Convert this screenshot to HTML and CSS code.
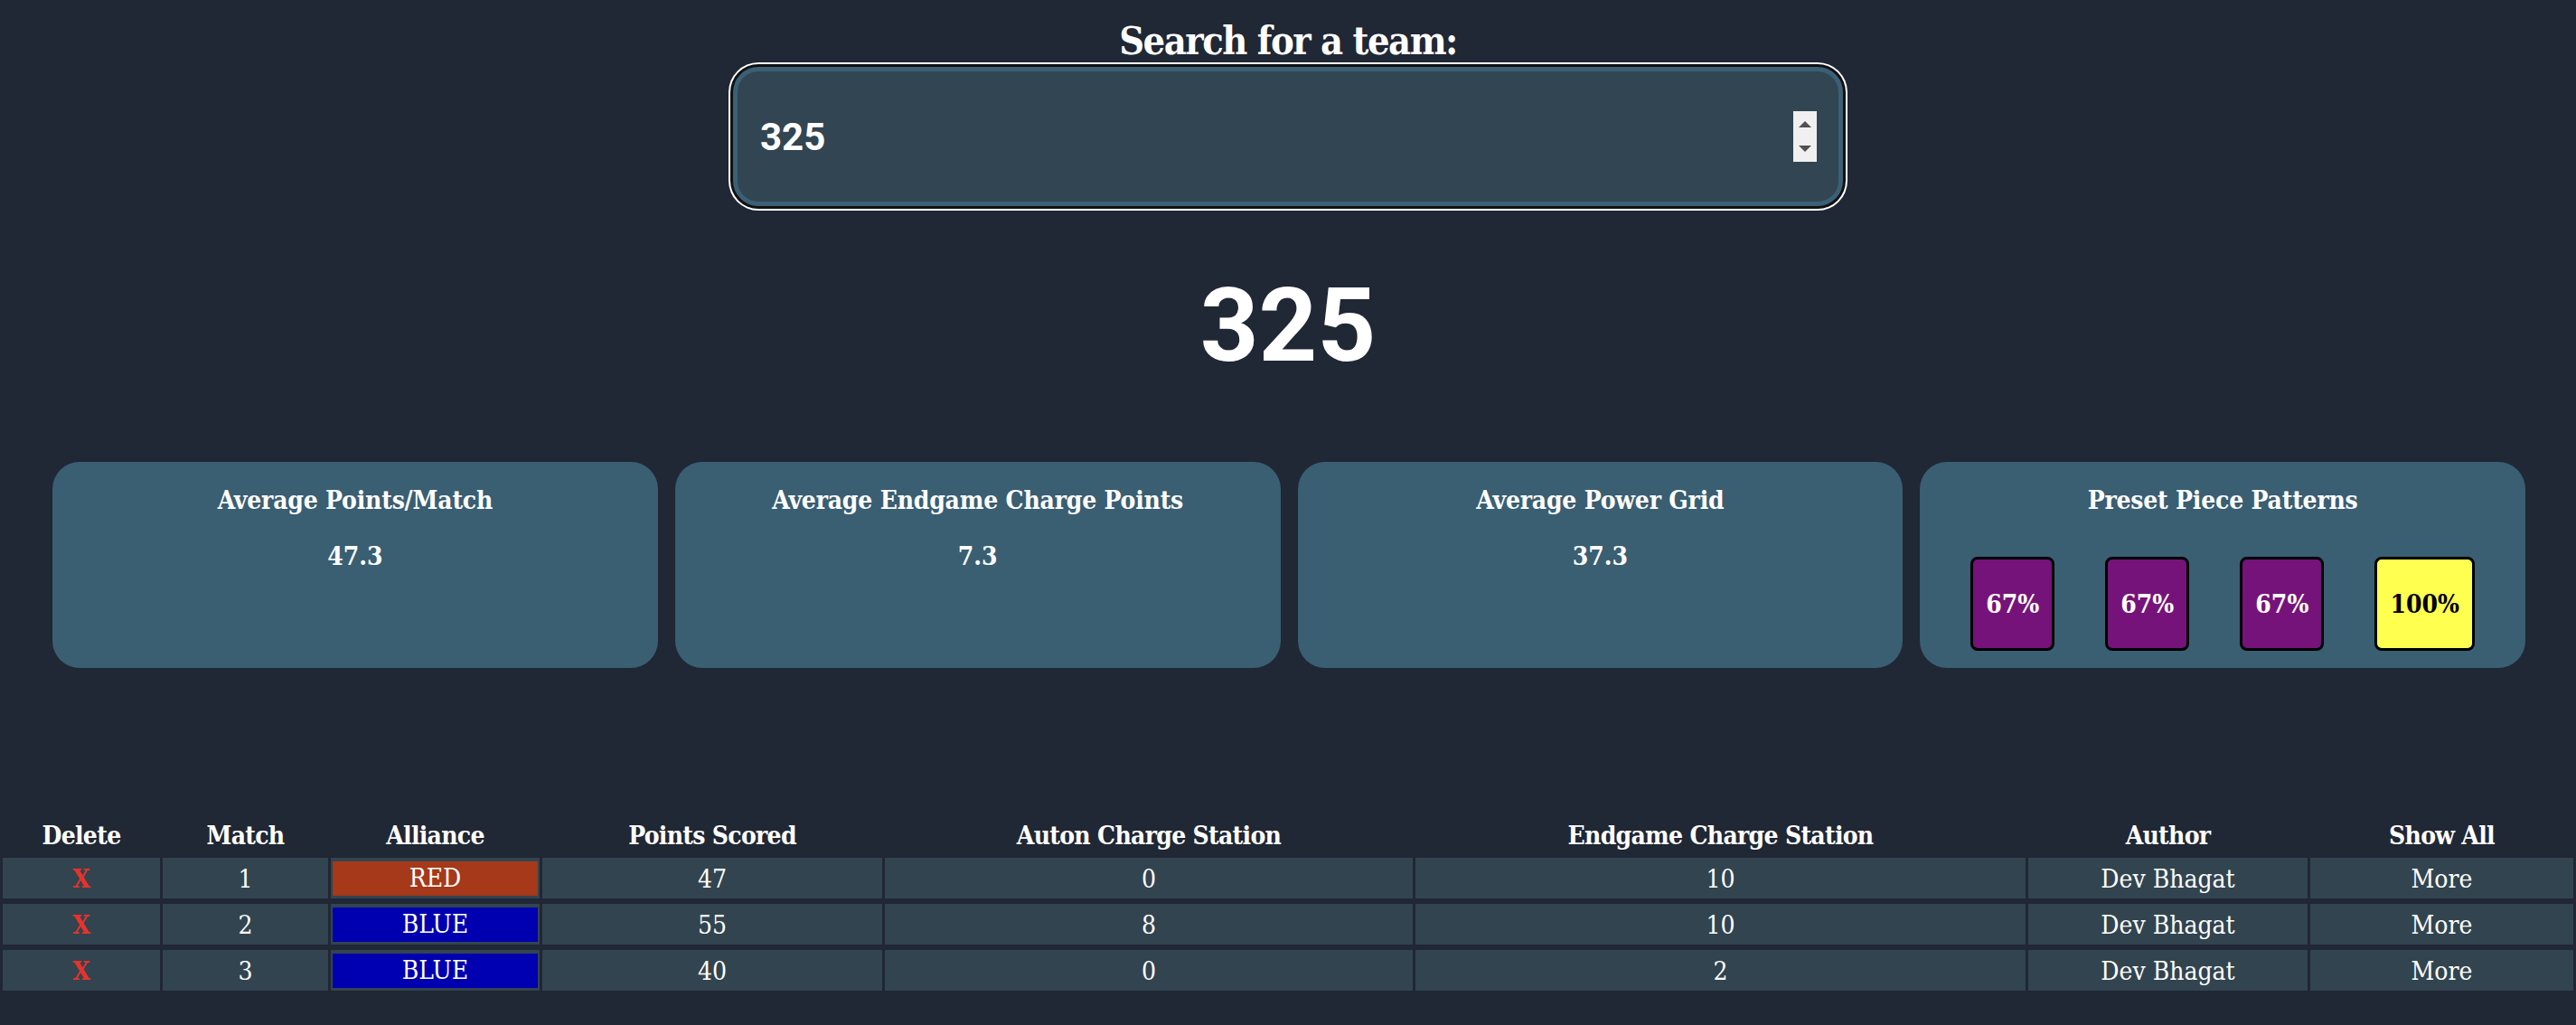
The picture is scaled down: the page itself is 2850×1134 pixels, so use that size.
FILE: index.html
```html
<!DOCTYPE html>
<html lang="en">
<head>
<meta charset="utf-8">
<title>Team Search</title>
<link rel="stylesheet" href="styles.css">
</head>
<body class="page">
<main class="app">
  <section class="search">
    <h2 class="search-label">Search for a team:</h2>
    <div class="search-field">
      <input class="search-input" type="text" value="325" aria-label="Team number">
      <span class="spinner" aria-hidden="true">
        <svg class="spinner-icon" width="26" height="56" viewBox="0 0 26 56">
          <polygon points="6,18 20,18 13,11" fill="#505050"/>
          <polygon points="6,38 20,38 13,45" fill="#505050"/>
        </svg>
      </span>
    </div>
  </section>

  <h1 class="team-number">325</h1>

  <section class="stats">
    <div class="card">
      <h3 class="card-title">Average Points/Match</h3>
      <p class="card-value">47.3</p>
    </div>
    <div class="card">
      <h3 class="card-title">Average Endgame Charge Points</h3>
      <p class="card-value">7.3</p>
    </div>
    <div class="card">
      <h3 class="card-title">Average Power Grid</h3>
      <p class="card-value">37.3</p>
    </div>
    <div class="card">
      <h3 class="card-title">Preset Piece Patterns</h3>
      <div class="patterns">
        <span class="piece piece-cube">67%</span>
        <span class="piece piece-cube">67%</span>
        <span class="piece piece-cube">67%</span>
        <span class="piece piece-cone">100%</span>
      </div>
    </div>
  </section>

  <table class="matches">
    <colgroup>
      <col class="col-delete">
      <col class="col-match">
      <col class="col-alliance">
      <col class="col-points">
      <col class="col-auton">
      <col class="col-endgame">
      <col class="col-author">
      <col class="col-more">
    </colgroup>
    <thead>
      <tr>
        <th>Delete</th>
        <th>Match</th>
        <th>Alliance</th>
        <th>Points Scored</th>
        <th>Auton Charge Station</th>
        <th>Endgame Charge Station</th>
        <th>Author</th>
        <th>Show All</th>
      </tr>
    </thead>
    <tbody>
      <tr>
        <td class="delete">X</td>
        <td>1</td>
        <td class="alliance"><span class="tag tag-red">RED</span></td>
        <td>47</td>
        <td>0</td>
        <td>10</td>
        <td>Dev Bhagat</td>
        <td>More</td>
      </tr>
      <tr>
        <td class="delete">X</td>
        <td>2</td>
        <td class="alliance"><span class="tag tag-blue">BLUE</span></td>
        <td>55</td>
        <td>8</td>
        <td>10</td>
        <td>Dev Bhagat</td>
        <td>More</td>
      </tr>
      <tr>
        <td class="delete">X</td>
        <td>3</td>
        <td class="alliance"><span class="tag tag-blue">BLUE</span></td>
        <td>40</td>
        <td>0</td>
        <td>2</td>
        <td>Dev Bhagat</td>
        <td>More</td>
      </tr>
    </tbody>
  </table>
</main>
</body>
</html>
```

FILE: styles.css
```css
* {
  box-sizing: border-box;
}

html, body {
  margin: 0;
  padding: 0;
}

.page {
  background: #202735;
  color: #ffffff;
  font-family: "DejaVu Serif Condensed", "DejaVu Serif", serif;
  font-size: 28px;
  width: 2850px;
  min-height: 1134px;
}

.app {
  display: flex;
  flex-direction: column;
}

/* ---------- search ---------- */
.search {
  display: flex;
  flex-direction: column;
  align-items: center;
}

.search-label {
  margin: 20px 0 4px;
  font-size: 43px;
  line-height: 50px;
  font-weight: bold;
  letter-spacing: -1.5px;
  text-align: center;
}

.search-field {
  position: relative;
  width: 1228px;
  height: 154px;
}

.search-input {
  width: 100%;
  height: 100%;
  margin: 0;
  padding: 0 60px 0 25px;
  border: 5px solid #3b6075;
  border-radius: 28px;
  background: #324552;
  color: #ffffff;
  font-family: Roboto, "Liberation Sans", sans-serif;
  font-weight: bold;
  font-size: 42px;
  box-shadow: 0 0 0 3px #111111, 0 0 0 5px #ffffff;
  outline: none;
}

.spinner {
  position: absolute;
  top: 49px;
  right: 29px;
  width: 26px;
  height: 56px;
  background: #f0f0f0;
  display: block;
}

.spinner-icon {
  display: block;
}

/* ---------- team number ---------- */
.team-number {
  margin: 63px 0 0;
  font-family: Roboto, "Liberation Sans", sans-serif;
  font-weight: bold;
  font-size: 113px;
  line-height: 140px;
  text-align: center;
}

/* ---------- stat cards ---------- */
.stats {
  margin-top: 80px;
  display: flex;
  gap: 19px;
  padding: 0 56px 0 58px;
}

.card {
  flex: 1 1 0;
  background: #3a5e72;
  border-radius: 30px;
  padding: 24px 0 19px;
  display: flex;
  flex-direction: column;
  align-items: center;
}

.card-title {
  margin: 0;
  font-size: 28px;
  line-height: 38px;
  font-weight: bold;
  letter-spacing: -0.2px;
  text-align: center;
}

.card-value {
  margin: 24px 0 0;
  font-size: 28px;
  line-height: 38px;
  font-weight: bold;
}

.patterns {
  margin-top: 43px;
  width: 100%;
  display: flex;
  justify-content: space-evenly;
}

.piece {
  display: flex;
  align-items: center;
  justify-content: center;
  height: 104px;
  min-width: 90px;
  padding: 0 14px;
  border: 3px solid #000000;
  border-radius: 8px;
  font-size: 28px;
  font-weight: bold;
}

.piece-cube {
  background: #76137a;
  color: #ffffff;
}

.piece-cone {
  background: #ffff50;
  color: #000000;
}

/* ---------- table ---------- */
.matches {
  margin-top: 162px;
  width: 2850px;
  table-layout: fixed;
  border-collapse: separate;
  border-spacing: 3px 6px;
}

.col-delete { width: 174px; }
.col-match { width: 183px; }
.col-alliance { width: 231px; }
.col-points { width: 376px; }
.col-auton { width: 584px; }
.col-endgame { width: 675px; }
.col-author { width: 309px; }
.col-more { width: 291px; }

.matches th {
  padding: 0;
  font-size: 28px;
  line-height: 36px;
  font-weight: bold;
  letter-spacing: -0.7px;
  text-align: center;
  color: #ffffff;
}

.matches td {
  background: #32444f;
  padding: 2px 0 0;
  height: 45px;
  font-size: 28px;
  line-height: 43px;
  text-align: center;
  color: #ffffff;
  white-space: nowrap;
}

.matches td.delete {
  color: #e8322a;
  font-weight: bold;
}

.matches td.alliance {
  padding: 4px 2px 3px;
}

.tag {
  display: block;
  height: 38px;
  line-height: 38px;
}

.tag-red {
  background: #a5391a;
}

.tag-blue {
  background: #0000b0;
}
```
